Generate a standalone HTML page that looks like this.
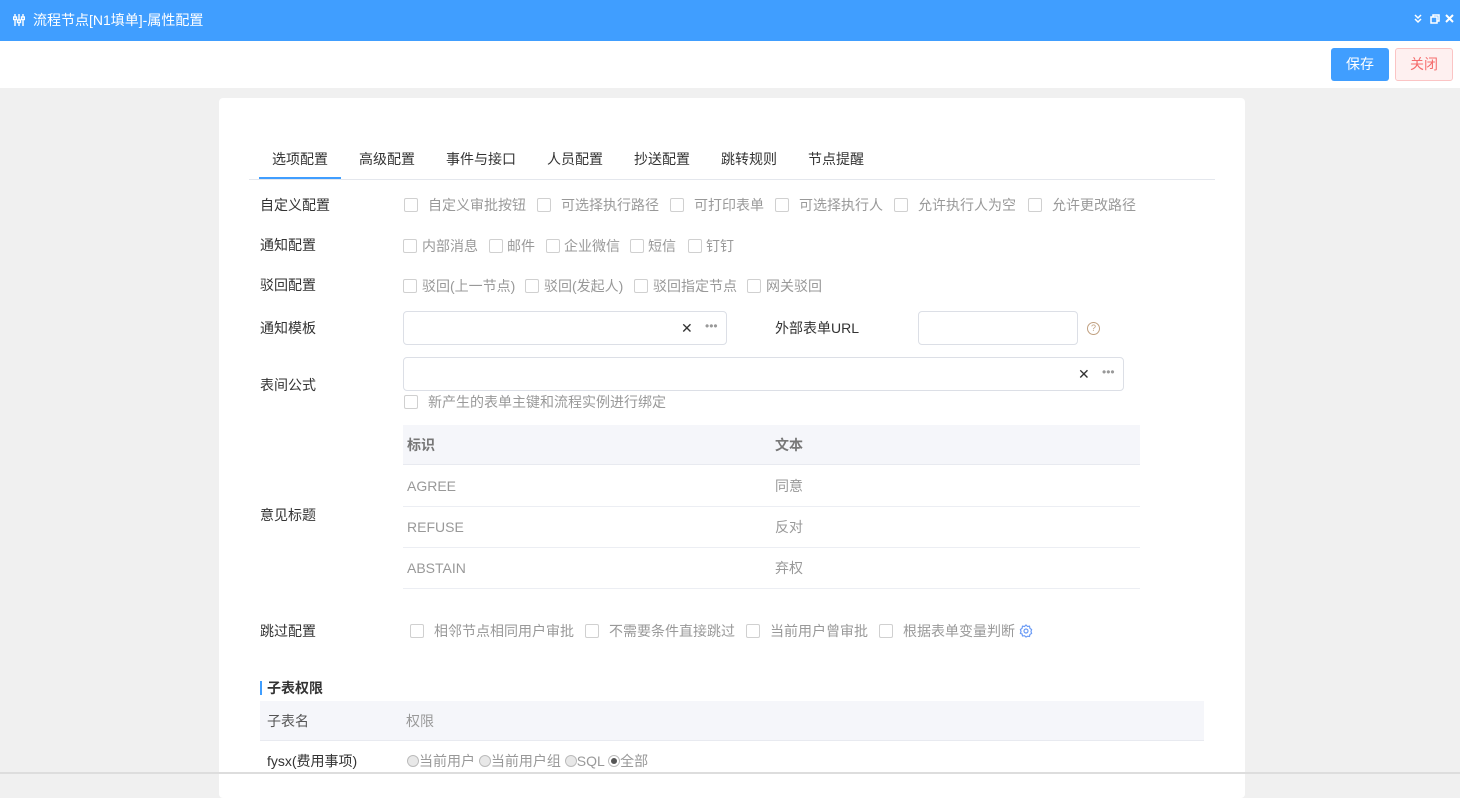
<!DOCTYPE html>
<html><head><meta charset="utf-8"><style>
*{margin:0;padding:0;box-sizing:border-box}
body{width:1460px;height:774px;overflow:hidden;background:#f0f0f0;font-family:"Liberation Sans","Noto Sans CJK SC",sans-serif;font-size:14px;color:#333;position:relative}
.a{position:absolute;white-space:nowrap;line-height:20px}
.cb{position:absolute;width:14px;height:14px;border:1px solid #d0d0d0;border-radius:2px;background:#fff}
.g{color:#999}
.inp{position:absolute;border:1px solid #dcdfe6;border-radius:4px;background:#fff}
.rd{display:inline-block;width:12px;height:12px;border-radius:50%;border:1px solid #bbb;background:#e8e8e8;vertical-align:-1px;position:relative}
.rd.on{background:#fff}
.rd.on:after{content:"";position:absolute;left:2px;top:2px;width:6px;height:6px;border-radius:50%;background:#555}
</style></head><body>
<div style="position:absolute;left:0;top:0;width:1460px;height:41px;background:#409eff"></div>
<svg style="position:absolute;left:13px;top:14px" width="12" height="12" viewBox="0 0 12 12" fill="none" stroke="#fff" stroke-width="1.4"><path d="M2 0v12M6 0v12M10 0v12"/><rect x="0.5" y="3" width="3" height="2.5" fill="#409eff"/><rect x="4.5" y="6" width="3" height="2.5" fill="#409eff"/><rect x="8.5" y="3" width="3" height="2.5" fill="#409eff"/></svg>
<div class="a" style="left:33px;top:10px;color:#fff;font-size:14px">流程节点[N1填单]-属性配置</div>
<svg style="position:absolute;left:1414px;top:13px" width="40" height="12" viewBox="0 0 40 12" fill="none" stroke="#fff" stroke-width="1.5"><path d="M1 2l3 3 3-3M1 6l3 3 3-3"/><rect x="17" y="4" width="6" height="6"/><path d="M19 4V2h6v6h-2"/><path d="M32 2l7 7M39 2l-7 7" stroke-width="2"/></svg>
<div style="position:absolute;left:0;top:41px;width:1460px;height:47px;background:#fff"></div>
<div style="position:absolute;left:1331px;top:48px;width:58px;height:33px;background:#409eff;border-radius:3px;color:#fff;text-align:center;line-height:33px">保存</div>
<div style="position:absolute;left:1395px;top:48px;width:58px;height:33px;background:#fef0f0;border:1px solid #fbc4c4;border-radius:3px;color:#f56c6c;text-align:center;line-height:31px">关闭</div>
<div style="position:absolute;left:219px;top:98px;width:1026px;height:700px;background:#fff;border-radius:4px"></div>
<div style="position:absolute;left:249px;top:179px;width:966px;height:1px;background:#e4e7ed"></div>
<div style="position:absolute;left:259px;top:177px;width:82px;height:2px;background:#409eff"></div>
<div class="a" style="left:272px;top:149px">选项配置</div>
<div class="a" style="left:359px;top:149px">高级配置</div>
<div class="a" style="left:446px;top:149px">事件与接口</div>
<div class="a" style="left:547px;top:149px">人员配置</div>
<div class="a" style="left:634px;top:149px">抄送配置</div>
<div class="a" style="left:721px;top:149px">跳转规则</div>
<div class="a" style="left:808px;top:149px">节点提醒</div>

<div class="a" style="left:260px;top:195px">自定义配置</div>
<div class="cb" style="left:404px;top:198px"></div><div class="a g" style="left:428px;top:195px">自定义审批按钮</div>
<div class="cb" style="left:537px;top:198px"></div><div class="a g" style="left:561px;top:195px">可选择执行路径</div>
<div class="cb" style="left:670px;top:198px"></div><div class="a g" style="left:694px;top:195px">可打印表单</div>
<div class="cb" style="left:775px;top:198px"></div><div class="a g" style="left:799px;top:195px">可选择执行人</div>
<div class="cb" style="left:894px;top:198px"></div><div class="a g" style="left:918px;top:195px">允许执行人为空</div>
<div class="cb" style="left:1028px;top:198px"></div><div class="a g" style="left:1052px;top:195px">允许更改路径</div>

<div class="a" style="left:260px;top:235px">通知配置</div>
<div class="cb" style="left:403px;top:239px"></div><div class="a g" style="left:422px;top:236px">内部消息</div>
<div class="cb" style="left:489px;top:239px"></div><div class="a g" style="left:507px;top:236px">邮件</div>
<div class="cb" style="left:546px;top:239px"></div><div class="a g" style="left:564px;top:236px">企业微信</div>
<div class="cb" style="left:630px;top:239px"></div><div class="a g" style="left:648px;top:236px">短信</div>
<div class="cb" style="left:688px;top:239px"></div><div class="a g" style="left:706px;top:236px">钉钉</div>

<div class="a" style="left:260px;top:275px">驳回配置</div>
<div class="cb" style="left:403px;top:279px"></div><div class="a g" style="left:422px;top:276px">驳回(上一节点)</div>
<div class="cb" style="left:525px;top:279px"></div><div class="a g" style="left:544px;top:276px">驳回(发起人)</div>
<div class="cb" style="left:634px;top:279px"></div><div class="a g" style="left:653px;top:276px">驳回指定节点</div>
<div class="cb" style="left:747px;top:279px"></div><div class="a g" style="left:766px;top:276px">网关驳回</div>

<div class="a" style="left:260px;top:318px">通知模板</div>
<div class="inp" style="left:403px;top:311px;width:324px;height:34px"></div>
<div class="a" style="left:681px;top:318px;color:#333">✕</div>
<div class="a" style="left:705px;top:316px;color:#999;font-size:12px">•••</div>
<div class="a" style="left:775px;top:318px">外部表单URL</div>
<div class="inp" style="left:918px;top:311px;width:160px;height:34px"></div>
<div style="position:absolute;left:1087px;top:322px;width:13px;height:13px;border:1px solid #c0a080;border-radius:50%;font-size:9px;line-height:11px;text-align:center;color:#c0a080">?</div>

<div class="a" style="left:260px;top:375px">表间公式</div>
<div class="inp" style="left:403px;top:357px;width:721px;height:34px"></div>
<div class="a" style="left:1078px;top:364px;color:#333">✕</div>
<div class="a" style="left:1102px;top:362px;color:#999;font-size:12px">•••</div>
<div class="cb" style="left:404px;top:395px"></div><div class="a g" style="left:428px;top:392px">新产生的表单主键和流程实例进行绑定</div>

<div style="position:absolute;left:403px;top:425px;width:737px;height:40px;background:#f5f6fa;border-bottom:1px solid #e8eaf0"></div>
<div class="a" style="left:407px;top:435px;color:#777;font-weight:bold">标识</div>
<div class="a" style="left:775px;top:435px;color:#777;font-weight:bold">文本</div>
<div style="position:absolute;left:403px;top:506px;width:737px;height:1px;background:#eceef3"></div>
<div style="position:absolute;left:403px;top:547px;width:737px;height:1px;background:#eceef3"></div>
<div style="position:absolute;left:403px;top:588px;width:737px;height:1px;background:#eceef3"></div>
<div class="a g" style="left:407px;top:476px">AGREE</div><div class="a g" style="left:775px;top:476px">同意</div>
<div class="a g" style="left:407px;top:517px">REFUSE</div><div class="a g" style="left:775px;top:517px">反对</div>
<div class="a g" style="left:407px;top:558px">ABSTAIN</div><div class="a g" style="left:775px;top:558px">弃权</div>
<div class="a" style="left:260px;top:505px">意见标题</div>

<div class="a" style="left:260px;top:621px">跳过配置</div>
<div class="cb" style="left:410px;top:624px"></div><div class="a g" style="left:434px;top:621px">相邻节点相同用户审批</div>
<div class="cb" style="left:585px;top:624px"></div><div class="a g" style="left:609px;top:621px">不需要条件直接跳过</div>
<div class="cb" style="left:746px;top:624px"></div><div class="a g" style="left:770px;top:621px">当前用户曾审批</div>
<div class="cb" style="left:879px;top:624px"></div><div class="a g" style="left:903px;top:621px">根据表单变量判断</div>
<svg style="position:absolute;left:1019px;top:624px" width="14" height="14" viewBox="0 0 14 14" fill="none" stroke="#6b9bf5" stroke-width="1.2"><circle cx="7" cy="7" r="2"/><path d="M7 1l1.5 1.5 2-.3.4 2L12.6 5.6 12 7.5l.6 1.9-1.7 1.1-.4 2-2-.3L7 13l-1.5-1.3-2 .3-.4-2L1.4 9.4 2 7.5 1.4 5.6 3.1 4.2l.4-2 2 .3z"/></svg>

<div style="position:absolute;left:260px;top:681px;width:2px;height:14px;background:#409eff"></div>
<div class="a" style="left:267px;top:678px;font-weight:bold;color:#333">子表权限</div>
<div style="position:absolute;left:260px;top:701px;width:944px;height:40px;background:#f5f6fa;border-bottom:1px solid #e8eaf0"></div>
<div class="a" style="left:267px;top:711px;color:#555">子表名</div>
<div class="a g" style="left:406px;top:711px">权限</div>
<div class="a" style="left:267px;top:751px">fysx(费用事项)</div>
<div class="a" style="left:407px;top:751px;color:#999"><span class="rd"></span>当前用户 <span class="rd"></span>当前用户组 <span class="rd"></span>SQL <span class="rd on"></span>全部</div>
<div style="position:absolute;left:0;top:772px;width:1460px;height:2px;background:#ddd"></div>
</body></html>
